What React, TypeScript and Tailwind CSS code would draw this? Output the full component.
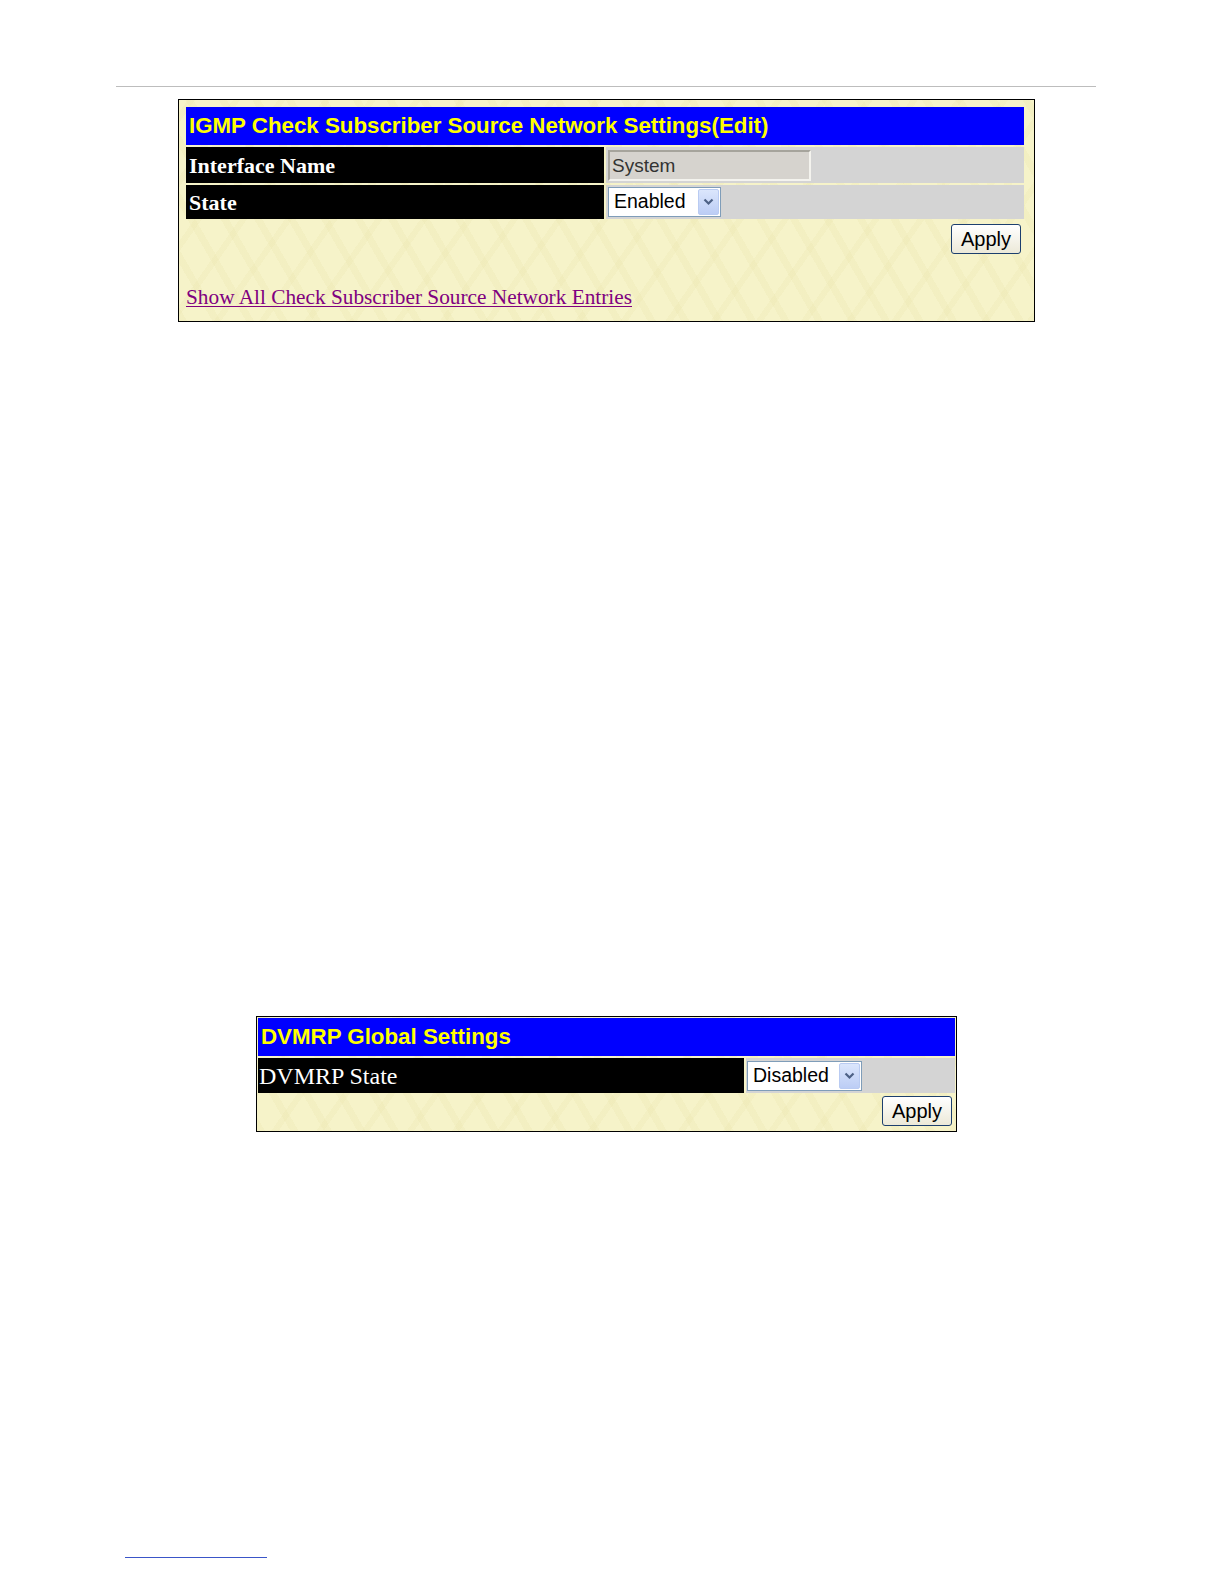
import React from 'react'

const texture =
  'bg-[#f6f3c9] bg-[repeating-linear-gradient(60deg,rgba(232,226,168,0.22)_0px,rgba(232,226,168,0.22)_7px,transparent_7px,transparent_29px),repeating-linear-gradient(-55deg,rgba(232,226,168,0.2)_0px,rgba(232,226,168,0.2)_6px,transparent_6px,transparent_37px)]'

function Chevron() {
  return (
    <span className="flex h-full w-[21px] items-center justify-center rounded-[2px] border border-[#b9cbf2] bg-[linear-gradient(#dbe6fc,#bccdf5)]">
      <svg width="11" height="8" viewBox="0 0 11 8">
        <path d="M1.5 1.5 L5.5 5.5 L9.5 1.5" fill="none" stroke="#4d6185" strokeWidth="2.2" />
      </svg>
    </span>
  )
}

function Select({ value, width }: { value: string; width: string }) {
  return (
    <div className={`flex h-[30px] items-center justify-between border border-[#7f9db9] bg-white py-[1px] pl-[5px] pr-[1px] ${width}`}>
      <span className="font-['Liberation_Sans',Arial,sans-serif] text-[19.5px] leading-none text-black">{value}</span>
      <Chevron />
    </div>
  )
}

function ApplyButton() {
  return (
    <button className="flex h-[30px] w-[70px] items-center justify-center rounded-[3px] border border-[#1c3f6e] bg-[linear-gradient(#ffffff,#ece9d8)] font-['Liberation_Sans',Arial,sans-serif] text-[20px] leading-none text-black">
      Apply
    </button>
  )
}

function Header({ title }: { title: string }) {
  return (
    <div className="flex h-[38px] items-center bg-[#0000ff] pl-[3px]">
      <span className="font-['Liberation_Sans',Arial,sans-serif] text-[22.3px] font-bold leading-none text-[#ffff00]">{title}</span>
    </div>
  )
}

export default function App() {
  return (
    <div className="relative h-[1584px] w-[1224px] overflow-hidden bg-white">
      <div className="pl-[116px] pr-[128px] pt-[86px]">
        <div className="h-px bg-[#bdbdbd]" />
      </div>

      {/* IGMP panel */}
      <div className={`ml-[178px] mt-[12px] h-[223px] w-[857px] border border-black p-[7px] pr-[10px] ${texture}`}>
        <Header title="IGMP Check Subscriber Source Network Settings(Edit)" />
        <div className="mt-[2px] flex h-[36px] gap-[2px]">
          <div className="flex w-[418px] items-center bg-black pl-[3px]">
            <span className="font-['Liberation_Serif','Times_New_Roman',serif] text-[22px] font-bold text-white">Interface Name</span>
          </div>
          <div className="flex flex-1 items-center bg-[#d4d4d4] pl-[2px]">
            <div className="flex h-[31px] w-[203px] items-center border-2 border-t-[#a6a49c] border-l-[#a6a49c] border-r-[#f4f3ee] border-b-[#f4f3ee] bg-[#d6d3ce] pl-[2px]">
              <span className="font-['Liberation_Sans',Arial,sans-serif] text-[19px] leading-none text-[#333]">System</span>
            </div>
          </div>
        </div>
        <div className="mt-[2px] flex h-[34px] gap-[2px]">
          <div className="flex w-[418px] items-center bg-black pl-[3px]">
            <span className="font-['Liberation_Serif','Times_New_Roman',serif] text-[22px] font-bold text-white">State</span>
          </div>
          <div className="flex flex-1 items-center bg-[#d4d4d4] pl-[2px]">
            <Select value="Enabled" width="w-[113px]" />
          </div>
        </div>
        <div className="mt-[5px] flex justify-end pr-[3px]">
          <ApplyButton />
        </div>
        <div className="mt-[28px]">
          <a className="font-['Liberation_Serif','Times_New_Roman',serif] text-[21.3px] text-[#800080] underline decoration-1 underline-offset-2">
            Show All Check Subscriber Source Network Entries
          </a>
        </div>
      </div>

      {/* DVMRP panel */}
      <div className={`ml-[256px] mt-[694px] h-[116px] w-[701px] border border-black p-[1px] ${texture}`}>
        <Header title="DVMRP Global Settings" />
        <div className="mt-[2px] flex h-[35px] gap-[2px]">
          <div className="flex w-[486px] items-center bg-black pl-[1px]">
            <span className="font-['Liberation_Serif','Times_New_Roman',serif] text-[24px] leading-none text-white">DVMRP State</span>
          </div>
          <div className="flex flex-1 items-center bg-[#d4d4d4] pl-[1px]">
            <Select value="Disabled" width="w-[115px]" />
          </div>
        </div>
        <div className="mt-[3px] flex justify-end pr-[3px]">
          <ApplyButton />
        </div>
      </div>

      <div className="ml-[125px] mt-[425px] h-px w-[142px] bg-[#3a55c8]" />
    </div>
  )
}
